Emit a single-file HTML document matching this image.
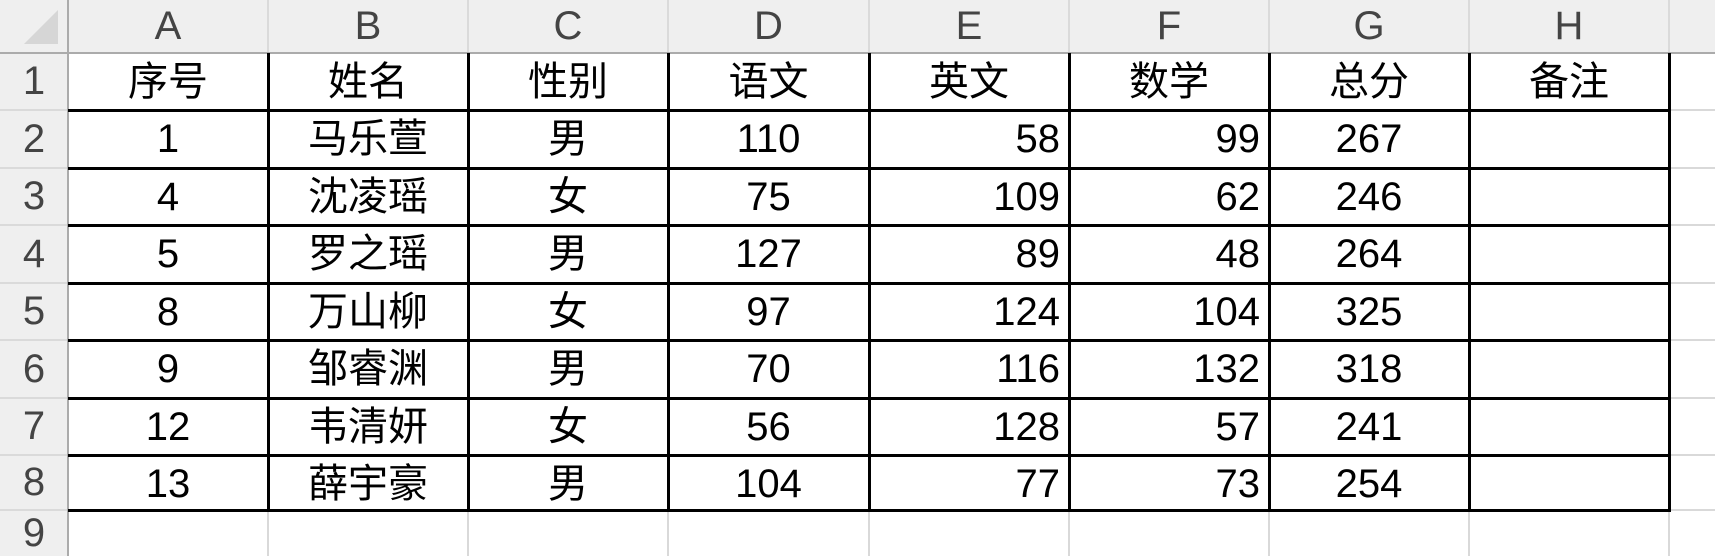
<!DOCTYPE html>
<html><head><meta charset="utf-8"><style>
body{margin:0;width:1715px;height:556px;overflow:hidden;background:#fff;position:relative;font-family:"Liberation Sans","Noto Sans CJK SC",sans-serif;}
div{position:absolute;box-sizing:border-box}
.c{font-size:40px;line-height:57px;height:57px;width:200px;color:#000;white-space:nowrap}
.m{text-align:center}.r{text-align:right;padding-right:9px}
.h{font-size:40px;color:#444;text-align:center}
</style></head><body>
<div style="left:0;top:0;width:1715px;height:53px;background:#efefef"></div>
<div style="left:0;top:0;width:68px;height:556px;background:#efefef"></div>
<svg style="position:absolute;left:0;top:0" width="68" height="53"><polygon points="58,10 58,44 24,44" fill="#d6d6d6"/></svg>
<div id="g"></div>
<script>
var X=[68,268,468,668,869,1069,1269,1469,1669],Y=[53,110,168,225,283,340,398,455,510];
var o='';
var L='ABCDEFGH';
for(var i=0;i<8;i++){o+='<div class="h" style="left:'+X[i]+'px;top:0;width:'+(X[i+1]-X[i])+'px;height:53px;line-height:53px">'+L[i]+'</div>';}
for(var j=0;j<9;j++){var t=j<8?Y[j]:510;var hh=j<8?Y[j+1]-Y[j]:46;o+='<div class="h" style="left:0;top:'+t+'px;width:68px;height:'+hh+'px;line-height:'+hh+'px">'+(j+1)+'</div>';}
for(var i=1;i<9;i++)o+='<div style="left:'+(X[i]-1)+'px;top:0;width:2px;height:53px;background:#dadada"></div>';
for(var j=1;j<9;j++)o+='<div style="left:0;top:'+(Y[j]-1)+'px;width:68px;height:2px;background:#dadada"></div>';
for(var i=1;i<9;i++)o+='<div style="left:'+(X[i]-1)+'px;top:510px;width:2px;height:46px;background:#d9d9d9"></div>';
for(var j=1;j<9;j++)o+='<div style="left:1669px;top:'+(Y[j]-1)+'px;width:46px;height:2px;background:#d9d9d9"></div>';
o+='<div style="left:0;top:52px;width:1715px;height:2px;background:#ababab"></div>';
o+='<div style="left:67px;top:0;width:2px;height:556px;background:#ababab"></div>';
var D=[['序号','姓名','性别','语文','英文','数学','总分','备注'],
['1','马乐萱','男','110','58','99','267',''],
['4','沈凌瑶','女','75','109','62','246',''],
['5','罗之瑶','男','127','89','48','264',''],
['8','万山柳','女','97','124','104','325',''],
['9','邹睿渊','男','70','116','132','318',''],
['12','韦清妍','女','56','128','57','241',''],
['13','薛宇豪','男','104','77','73','254','']];
for(var j=0;j<8;j++)for(var i=0;i<8;i++){var cl=(j>0&&(i==4||i==5))?'r':'m';
o+='<div class="c '+cl+'" style="left:'+X[i]+'px;top:'+(Y[j]+1)+'px;width:'+(X[i+1]-X[i])+'px">'+D[j][i]+'</div>';}
for(var i=1;i<9;i++)o+='<div style="left:'+(X[i]-1)+'px;top:53px;width:3px;height:459px;background:#000"></div>';
for(var j=1;j<9;j++)o+='<div style="left:68px;top:'+(Y[j]-1)+'px;width:1603px;height:3px;background:#000"></div>';
document.getElementById('g').outerHTML=o;
</script>
</body></html>
